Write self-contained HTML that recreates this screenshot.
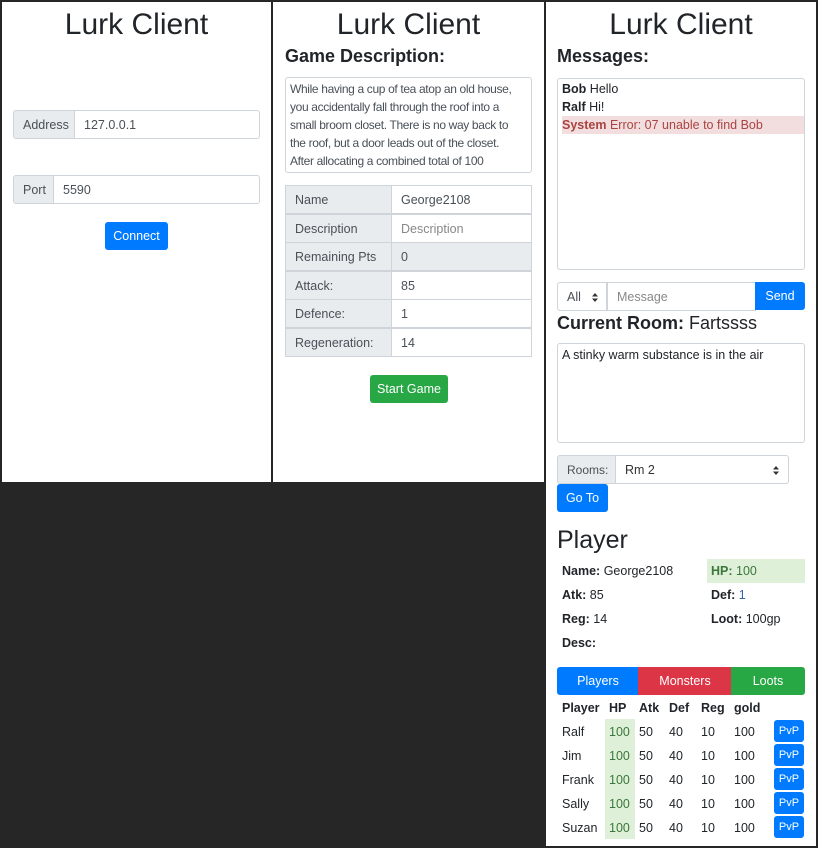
<!DOCTYPE html>
<html><head><meta charset="utf-8"><style>
*{box-sizing:border-box;margin:0;padding:0}
body{width:818px;height:848px;background:#262626;font-family:"Liberation Sans",sans-serif;color:#212529;font-size:12.5px;position:relative;overflow:hidden}
.p{position:absolute;background:#fff}
.a{position:absolute}
.t{position:absolute;left:0;right:0;text-align:center;font-size:30px;top:5px;line-height:36px}
.h{position:absolute;font-weight:bold;font-size:18px;line-height:22px}
.box{position:absolute;border:1px solid #ced4da;border-radius:3px;background:#fff}
.lab{position:absolute;background:#e9ecef;border:1px solid #ced4da;color:#495057;padding-left:9px;line-height:28px}
.inp{position:absolute;border:1px solid #ced4da;background:#fff;color:#495057;padding-left:9px;line-height:28px}
.btn{position:absolute;color:#fff;border-radius:3px;text-align:center;line-height:29px}
.blue{background:#007bff}.green{background:#28a745}.red{background:#dc3545}
b{font-weight:bold}
</style></head><body>
<div class="p" style="left:2px;top:2px;width:269px;height:480px">
<div class="t">Lurk Client</div>
</div>
<div class="lab" style="left:13px;top:110px;width:62px;height:29px;border-radius:3px 0 0 3px">Address</div>
<div class="inp" style="left:74px;top:110px;width:186px;height:29px;border-radius:0 3px 3px 0">127.0.0.1</div>
<div class="lab" style="left:13px;top:175px;width:41px;height:29px;border-radius:3px 0 0 3px">Port</div>
<div class="inp" style="left:53px;top:175px;width:207px;height:29px;border-radius:0 3px 3px 0">5590</div>
<div class="btn blue" style="left:105px;top:222px;width:63px;height:28px">Connect</div>

<div class="p" style="left:273px;top:2px;width:271px;height:480px">
<div class="t">Lurk Client</div>
</div>
<div class="h" style="left:285px;top:45px">Game Description:</div>
<div class="box" style="left:285px;top:77px;width:247px;height:96px;padding:2px 4px;line-height:18px;color:#495057;overflow:hidden;font-size:12px;letter-spacing:-0.35px;white-space:nowrap">While having a cup of tea atop an old house,<br>you accidentally fall through the roof into a<br>small broom closet. There is no way back to<br>the roof, but a door leads out of the closet.<br>After allocating a combined total of 100</div>
<div class="a" style="left:285px;top:185px">
<div class="lab" style="left:0;top:0;width:107px;height:29px">Name</div><div class="inp" style="left:106px;top:0;width:141px;height:29px">George2108</div>
<div class="lab" style="left:0;top:28.5px;width:107px;height:29px">Description</div><div class="inp" style="left:106px;top:28.5px;width:141px;height:29px;color:#888">Description</div>
<div class="lab" style="left:0;top:57px;width:107px;height:29px">Remaining Pts</div><div class="inp" style="left:106px;top:57px;width:141px;height:29px;background:#e9ecef">0</div>
<div class="lab" style="left:0;top:85.5px;width:107px;height:29px">Attack:</div><div class="inp" style="left:106px;top:85.5px;width:141px;height:29px">85</div>
<div class="lab" style="left:0;top:114px;width:107px;height:29px">Defence:</div><div class="inp" style="left:106px;top:114px;width:141px;height:29px">1</div>
<div class="lab" style="left:0;top:142.5px;width:107px;height:29px">Regeneration:</div><div class="inp" style="left:106px;top:142.5px;width:141px;height:29px">14</div>
</div>
<div class="btn green" style="left:370px;top:375px;width:78px;height:28px">Start Game</div>

<div class="p" style="left:546px;top:2px;width:270px;height:844px">
<div class="t">Lurk Client</div>
</div>
<div class="h" style="left:557px;top:45px">Messages:</div>
<div class="box" style="left:557px;top:78px;width:248px;height:192px;line-height:18px;padding-top:1px">
<div style="padding-left:4px"><b>Bob</b> Hello</div>
<div style="padding-left:4px"><b>Ralf</b> Hi!</div>
<div style="margin-left:4px;padding-left:0;background:#f2dede;color:#a94442"><b>System</b> Error: 07 unable to find Bob</div>
</div>
<div class="inp" style="left:557px;top:282px;width:50px;height:29px;border-radius:3px 0 0 3px">All<svg style="position:absolute;left:34px;top:10px" width="6" height="9"><path d="M0 3.5L3 0L6 3.5ZM0 5.5L3 9L6 5.5Z" fill="#333"/></svg></div>
<div class="inp" style="left:607px;top:282px;width:149px;height:29px;color:#888">Message</div>
<div class="btn blue" style="left:755px;top:282px;width:50px;height:28px;border-radius:0 3px 3px 0">Send</div>
<div class="h" style="left:557px;top:312px"><b>Current Room:</b> <span style="font-weight:normal">Fartssss</span></div>
<div class="box" style="left:557px;top:343px;width:248px;height:100px;padding:2px 4px;line-height:18px">A stinky warm substance is in the air</div>
<div class="lab" style="left:557px;top:455px;width:59px;height:29px;border-radius:3px 0 0 3px;font-size:12px">Rooms:</div>
<div class="inp" style="left:615px;top:455px;width:174px;height:29px;border-radius:0 3px 3px 0;color:#333">Rm 2<svg style="position:absolute;left:157px;top:10px" width="6" height="9"><path d="M0 3.5L3 0L6 3.5ZM0 5.5L3 9L6 5.5Z" fill="#333"/></svg></div>
<div class="btn blue" style="left:557px;top:484px;width:51px;height:28px">Go To</div>
<div class="a" style="left:557px;top:525px;font-size:25px;line-height:30px">Player</div>
<div class="a" style="left:707px;top:559px;width:98px;height:24px;background:#dff0d8"></div>
<div class="a" style="left:562px;top:563px;line-height:16px"><b>Name:</b> George2108</div>
<div class="a" style="left:711px;top:563px;line-height:16px;color:#3c763d"><b>HP:</b> 100</div>
<div class="a" style="left:562px;top:587px;line-height:16px"><b>Atk:</b> 85</div>
<div class="a" style="left:711px;top:587px;line-height:16px"><b>Def:</b> <span style="color:#3366aa">1</span></div>
<div class="a" style="left:562px;top:611px;line-height:16px"><b>Reg:</b> 14</div>
<div class="a" style="left:711px;top:611px;line-height:16px"><b>Loot:</b> 100gp</div>
<div class="a" style="left:562px;top:635px;line-height:16px"><b>Desc:</b></div>
<div class="btn blue" style="left:557px;top:667px;width:82px;height:28px;border-radius:3px 0 0 3px">Players</div>
<div class="btn red" style="left:638px;top:667px;width:94px;height:28px;border-radius:0">Monsters</div>
<div class="btn green" style="left:731px;top:667px;width:74px;height:28px;border-radius:0 3px 3px 0">Loots</div>
<div class="a" style="left:605px;top:719px;width:30px;height:120px;background:#dff0d8"></div>
<div class="a" style="left:0;top:700px;font-weight:bold;line-height:16px">
<span class="a" style="left:562px">Player</span><span class="a" style="left:609px">HP</span><span class="a" style="left:639px">Atk</span><span class="a" style="left:669px">Def</span><span class="a" style="left:701px">Reg</span><span class="a" style="left:734px">gold</span></div>
<div class="a" style="left:0;top:724px;line-height:16px">
<span class="a" style="left:562px;top:0">Ralf</span><span class="a" style="left:562px;top:24px">Jim</span><span class="a" style="left:562px;top:48px">Frank</span><span class="a" style="left:562px;top:72px">Sally</span><span class="a" style="left:562px;top:96px">Suzan</span>
<span class="a" style="left:609px;top:0;color:#3c763d">100</span><span class="a" style="left:609px;top:24px;color:#3c763d">100</span><span class="a" style="left:609px;top:48px;color:#3c763d">100</span><span class="a" style="left:609px;top:72px;color:#3c763d">100</span><span class="a" style="left:609px;top:96px;color:#3c763d">100</span>
<span class="a" style="left:639px;top:0">50</span><span class="a" style="left:639px;top:24px">50</span><span class="a" style="left:639px;top:48px">50</span><span class="a" style="left:639px;top:72px">50</span><span class="a" style="left:639px;top:96px">50</span>
<span class="a" style="left:669px;top:0">40</span><span class="a" style="left:669px;top:24px">40</span><span class="a" style="left:669px;top:48px">40</span><span class="a" style="left:669px;top:72px">40</span><span class="a" style="left:669px;top:96px">40</span>
<span class="a" style="left:701px;top:0">10</span><span class="a" style="left:701px;top:24px">10</span><span class="a" style="left:701px;top:48px">10</span><span class="a" style="left:701px;top:72px">10</span><span class="a" style="left:701px;top:96px">10</span>
<span class="a" style="left:734px;top:0">100</span><span class="a" style="left:734px;top:24px">100</span><span class="a" style="left:734px;top:48px">100</span><span class="a" style="left:734px;top:72px">100</span><span class="a" style="left:734px;top:96px">100</span>
</div>
<div class="btn blue" style="left:774px;top:720px;width:30px;height:22px;line-height:23px;font-size:11px">PvP</div>
<div class="btn blue" style="left:774px;top:744px;width:30px;height:22px;line-height:23px;font-size:11px">PvP</div>
<div class="btn blue" style="left:774px;top:768px;width:30px;height:22px;line-height:23px;font-size:11px">PvP</div>
<div class="btn blue" style="left:774px;top:792px;width:30px;height:22px;line-height:23px;font-size:11px">PvP</div>
<div class="btn blue" style="left:774px;top:816px;width:30px;height:22px;line-height:23px;font-size:11px">PvP</div>
</body></html>
